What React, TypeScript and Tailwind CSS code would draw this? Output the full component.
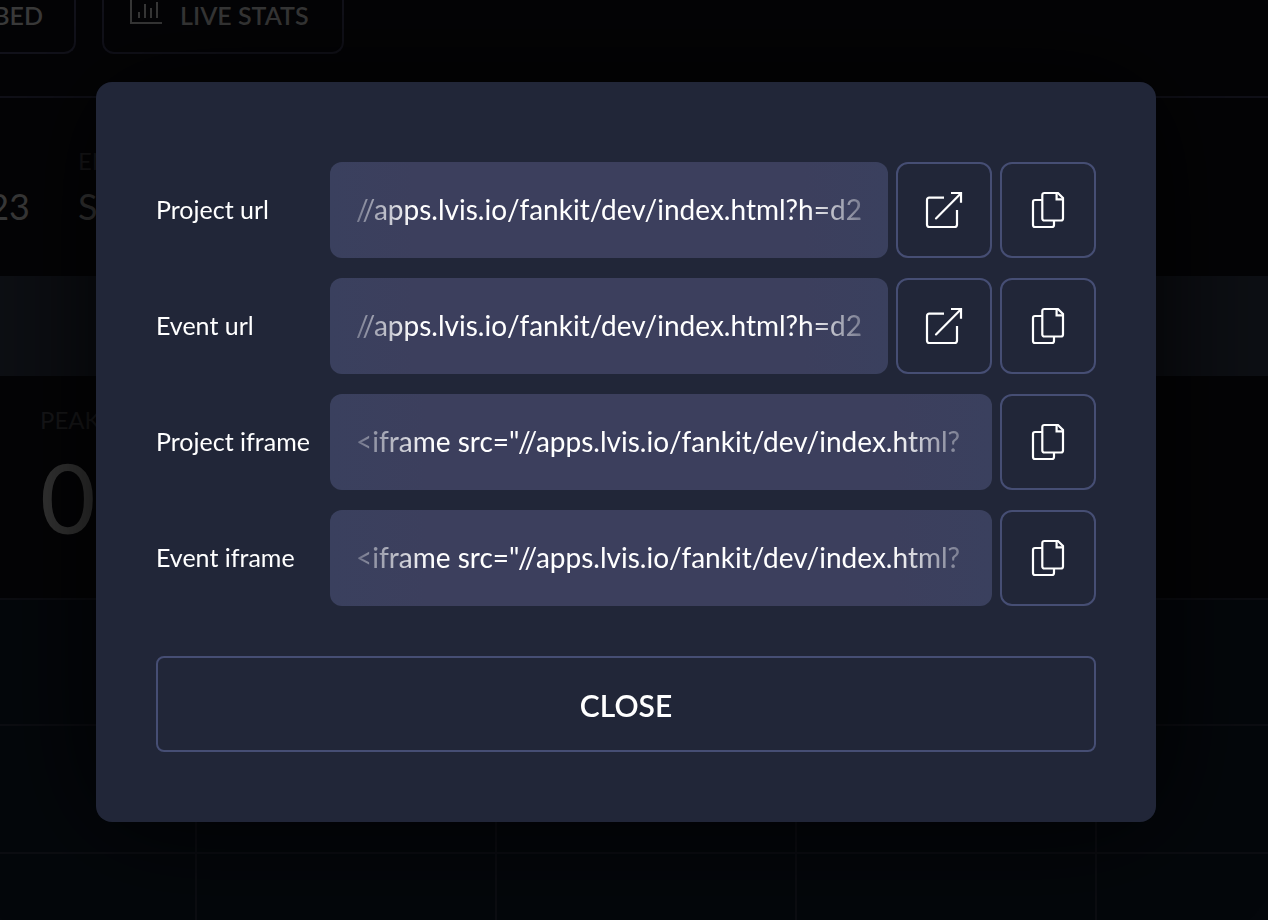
import React from "react";

type LinkRow = {
  id: string;
  label: string;
  value: string;
  openable: boolean;
};

const rows: LinkRow[] = [
  { id: "project-url", label: "Project url", value: "//apps.lvis.io/fankit/dev/index.html?h=d2", openable: true },
  { id: "event-url", label: "Event url", value: "//apps.lvis.io/fankit/dev/index.html?h=d2", openable: true },
  { id: "project-iframe", label: "Project iframe", value: '<iframe src="//apps.lvis.io/fankit/dev/index.html?', openable: false },
  { id: "event-iframe", label: "Event iframe", value: '<iframe src="//apps.lvis.io/fankit/dev/index.html?', openable: false },
];

function OpenIcon() {
  return (
    <svg width="40" height="40" viewBox="0 0 40 40" fill="none" stroke="currentColor" strokeWidth="2.2" aria-hidden="true">
      <path d="M20 7.7H5.2A2.2 2.2 0 0 0 3 9.9V34.8A2.2 2.2 0 0 0 5.2 37H30.8A2.2 2.2 0 0 0 33 34.8V20" />
      <path d="M12 28.4L37 3.2" strokeLinecap="round" />
      <path d="M27 3H37V12.8" />
    </svg>
  );
}

function CopyIcon() {
  return (
    <svg width="40" height="40" viewBox="0 0 40 40" fill="none" stroke="currentColor" strokeWidth="2.2" aria-hidden="true">
      <path d="M14 10H7A2 2 0 0 0 5 12V35A2 2 0 0 0 7 37H24A2 2 0 0 0 26 35V31" />
      <path d="M30 3H16.3A2 2 0 0 0 14.3 5V28.5A2 2 0 0 0 16.3 30.5H33A2 2 0 0 0 35 28.5V8Z" />
      <path d="M28.6 3V9.4H35" />
    </svg>
  );
}

function ChartIcon() {
  return (
    <svg width="32" height="32" viewBox="0 0 32 32" fill="none" stroke="currentColor" strokeWidth="2" aria-hidden="true">
      <path d="M1 0V31H32" />
      <path d="M9 20V26M15 12V26M21 16V26M27 10V26" />
    </svg>
  );
}

function IconButton({ label, children }: { label: string; children: React.ReactNode }) {
  return (
    <button
      type="button"
      aria-label={label}
      className="flex size-24 shrink-0 items-center justify-center rounded-xl border-2 border-[#464e74] text-white"
    >
      {children}
    </button>
  );
}

function Backdrop() {
  return (
    <div className="flex min-h-screen flex-col bg-[#040406] text-[#3a3a3a]">
      <header className="flex h-[98px] items-start gap-[26px] border-b-2 border-[#101018]">
        <button
          type="button"
          className="flex h-[54px] w-[76px] justify-end rounded-br-xl border-r-2 border-b-2 border-[#12121b] pr-[31px] text-[25px] leading-[30px] font-semibold"
        >
          BED
        </button>
        <button
          type="button"
          className="flex h-[54px] w-[242px] items-start gap-[18px] rounded-b-xl border-x-2 border-b-2 border-[#12121b] pl-[26px] text-[25px] leading-[30px] font-semibold"
        >
          <span className="-mt-2">
            <ChartIcon />
          </span>
          LIVE STATS
        </button>
      </header>
      <section className="flex h-[178px] gap-12 pt-[47px]">
        <div className="flex w-[30px] justify-end pt-8 text-4xl leading-[58px]">23</div>
        <div>
          <div className="text-2xl text-[#18181a]">END</div>
          <div className="text-4xl leading-[58px]">Sep</div>
        </div>
      </section>
      <div className="h-[100px] bg-[#0d0f14]" />
      <section className="h-[222px] pt-7 pl-10">
        <div className="text-2xl text-[#18181a]">PEAK</div>
        <div className="text-8xl leading-[122px] text-[#363636]">0</div>
      </section>
      <div className="h-32 border-y-2 border-[#0c0d12] bg-[#04070b]" />
      <div className="h-32 border-b-2 border-[#0c0d12] bg-[#04070b]" />
      <div className="grid flex-1 grid-cols-[197px_300px_300px_300px_1fr] bg-[#04070b]">
        <div className="-mt-10 border-r-2 border-[#0c0d12]" />
        <div className="-mt-10 border-r-2 border-[#0c0d12]" />
        <div className="-mt-10 border-r-2 border-[#0c0d12]" />
        <div className="-mt-10 border-r-2 border-[#0c0d12]" />
        <div />
      </div>
    </div>
  );
}

export default function App() {
  return (
    <div className="font-['Lato','Noto_Sans',sans-serif]">
      <Backdrop />
      <div className="fixed inset-0 flex items-center justify-center pr-4 pb-4">
        <div
          role="dialog"
          aria-modal="true"
          aria-label="Share links"
          className="w-full max-w-[1060px] rounded-2xl bg-[#212638] px-15 pt-20 pb-[70px] text-white shadow-[0_0_120px_rgba(0,0,0,0.9)]"
        >
          <div className="flex flex-col gap-5">
            {rows.map((row) => (
              <div key={row.id} className="flex items-center gap-2">
                <label htmlFor={row.id} className="w-[166px] shrink-0 pb-[3px] text-[25px] leading-8">
                  {row.label}
                </label>
                <div className="h-24 min-w-0 flex-1 rounded-xl bg-[linear-gradient(to_right,#3a405e,#3c3f5d_15%,#3c3f5d_85%,#3a405e)]">
                  <input
                    id={row.id}
                    readOnly
                    value={row.value}
                    className="h-full w-full bg-transparent px-[26px] pb-[2px] text-[28px] text-white outline-none [mask-image:linear-gradient(to_right,transparent,black_15%,black_85%,transparent)]"
                  />
                </div>
                {row.openable && (
                  <IconButton label={`Open ${row.label}`}>
                    <OpenIcon />
                  </IconButton>
                )}
                <IconButton label={`Copy ${row.label}`}>
                  <CopyIcon />
                </IconButton>
              </div>
            ))}
          </div>
          <button
            type="button"
            className="mt-[50px] flex h-24 w-full items-center justify-center rounded-lg border-2 border-[#464e74] pt-[2px] text-[30px] font-semibold"
          >
            CLOSE
          </button>
        </div>
      </div>
    </div>
  );
}
